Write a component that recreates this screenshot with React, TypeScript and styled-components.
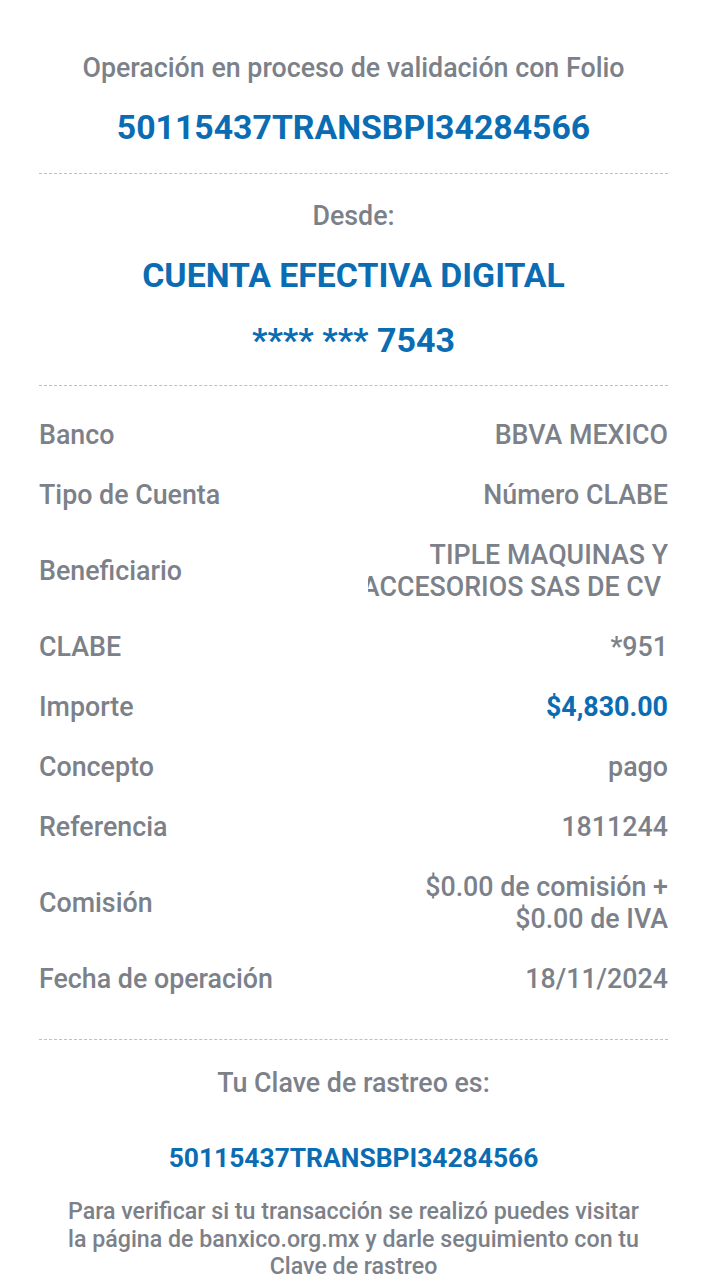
import React from "react";
import styled, { createGlobalStyle } from "styled-components";

const GlobalStyle = createGlobalStyle`
  html, body {
    margin: 0;
    padding: 0;
    background: #ffffff;
  }
  body {
    font-family: Roboto, "Noto Sans", Arial, sans-serif;
    -webkit-font-smoothing: antialiased;
  }
`;

const GRAY = "#7c8189";
const BLUE = "#0a6cb2";

const Page = styled.div`
  width: 707px;
  height: 1280px;
  overflow: hidden;
  background: #fff;
  box-sizing: border-box;
  padding: 0 39px;
  display: flex;
  flex-direction: column;
`;

const Header = styled.section`
  display: flex;
  flex-direction: column;
  align-items: center;
  text-align: center;
`;

const Caption = styled.div<{ $top?: number }>`
  color: ${GRAY};
  font-size: 26.8px;
  font-weight: 500;
  line-height: 32px;
  margin-top: ${(p) => p.$top ?? 0}px;
  white-space: nowrap;
`;

const Highlight = styled.div<{ $size: number; $top: number }>`
  color: ${BLUE};
  font-size: ${(p) => p.$size}px;
  font-weight: 700;
  line-height: 40px;
  margin-top: ${(p) => p.$top}px;
  white-space: nowrap;
`;

const Divider = styled.hr<{ $top: number }>`
  width: 100%;
  margin: ${(p) => p.$top}px 0 0;
  border: none;
  border-top: 1px dashed #bdbfc3;
  height: 0;
`;

const Details = styled.dl`
  margin: 19px 0 0;
  display: flex;
  flex-direction: column;
`;

const Row = styled.div<{ $tall?: boolean }>`
  display: flex;
  align-items: center;
  justify-content: space-between;
  min-height: ${(p) => (p.$tall ? 92 : 60)}px;
  font-size: 26.8px;
  font-weight: 500;
  line-height: 32px;
  color: ${GRAY};
`;

const Label = styled.dt`
  margin: 0;
  white-space: nowrap;
`;

const Value = styled.dd<{ $accent?: boolean }>`
  margin: 0;
  width: 300px;
  display: flex;
  flex-direction: column;
  align-items: flex-end;
  text-align: right;
  color: ${(p) => (p.$accent ? BLUE : GRAY)};
  font-weight: ${(p) => (p.$accent ? 700 : 500)};
`;

const Line = styled.span<{ $pad?: number }>`
  display: flex;
  justify-content: flex-end;
  width: 100%;
  overflow: hidden;
  white-space: nowrap;
  padding-right: ${(p) => p.$pad ?? 0}px;
  box-sizing: border-box;
`;

const Footer = styled.section`
  display: flex;
  flex-direction: column;
  align-items: center;
  text-align: center;
`;

const Note = styled.p`
  margin: 20px 0 0;
  color: ${GRAY};
  font-size: 23.2px;
  font-weight: 500;
  line-height: 27.5px;
  white-space: nowrap;
`;

const folio = "50115437TRANSBPI34284566";

const rows: { label: string; lines: string[]; accent?: boolean; pad?: number[] }[] = [
  { label: "Banco", lines: ["BBVA MEXICO"] },
  { label: "Tipo de Cuenta", lines: ["Número CLABE"] },
  { label: "Beneficiario", lines: ["TIPLE MAQUINAS Y", "ACCESORIOS SAS DE CV"], pad: [0, 7] },
  { label: "CLABE", lines: ["*951"] },
  { label: "Importe", lines: ["$4,830.00"], accent: true },
  { label: "Concepto", lines: ["pago"] },
  { label: "Referencia", lines: ["1811244"] },
  { label: "Comisión", lines: ["$0.00 de comisión +", "$0.00 de IVA"] },
  { label: "Fecha de operación", lines: ["18/11/2024"] },
];

export default function App() {
  return (
    <>
      <GlobalStyle />
      <Page>
        <Header>
          <Caption $top={52}>Operación en proceso de validación con Folio</Caption>
          <Highlight $size={33.8} $top={24}>{folio}</Highlight>
          <Divider $top={25} />
          <Caption $top={26}>Desde:</Caption>
          <Highlight $size={33.8} $top={24}>CUENTA EFECTIVA DIGITAL</Highlight>
          <Highlight $size={34} $top={24}>**** *** 7543</Highlight>
          <Divider $top={25} />
        </Header>

        <Details>
          {rows.map((r) => (
            <Row key={r.label} $tall={r.lines.length > 1}>
              <Label>{r.label}</Label>
              <Value $accent={r.accent}>
                {r.lines.map((l, i) => (
                  <Line key={i} $pad={r.pad?.[i]}>{l}</Line>
                ))}
              </Value>
            </Row>
          ))}
        </Details>

        <Footer>
          <Divider $top={30} />
          <Caption $top={27}>Tu Clave de rastreo es:</Caption>
          <Highlight $size={26.4} $top={39}>{folio}</Highlight>
          <Note>
            Para verificar si tu transacción se realizó puedes visitar
            <br />
            la página de banxico.org.mx y darle seguimiento con tu
            <br />
            Clave de rastreo
          </Note>
        </Footer>
      </Page>
    </>
  );
}
